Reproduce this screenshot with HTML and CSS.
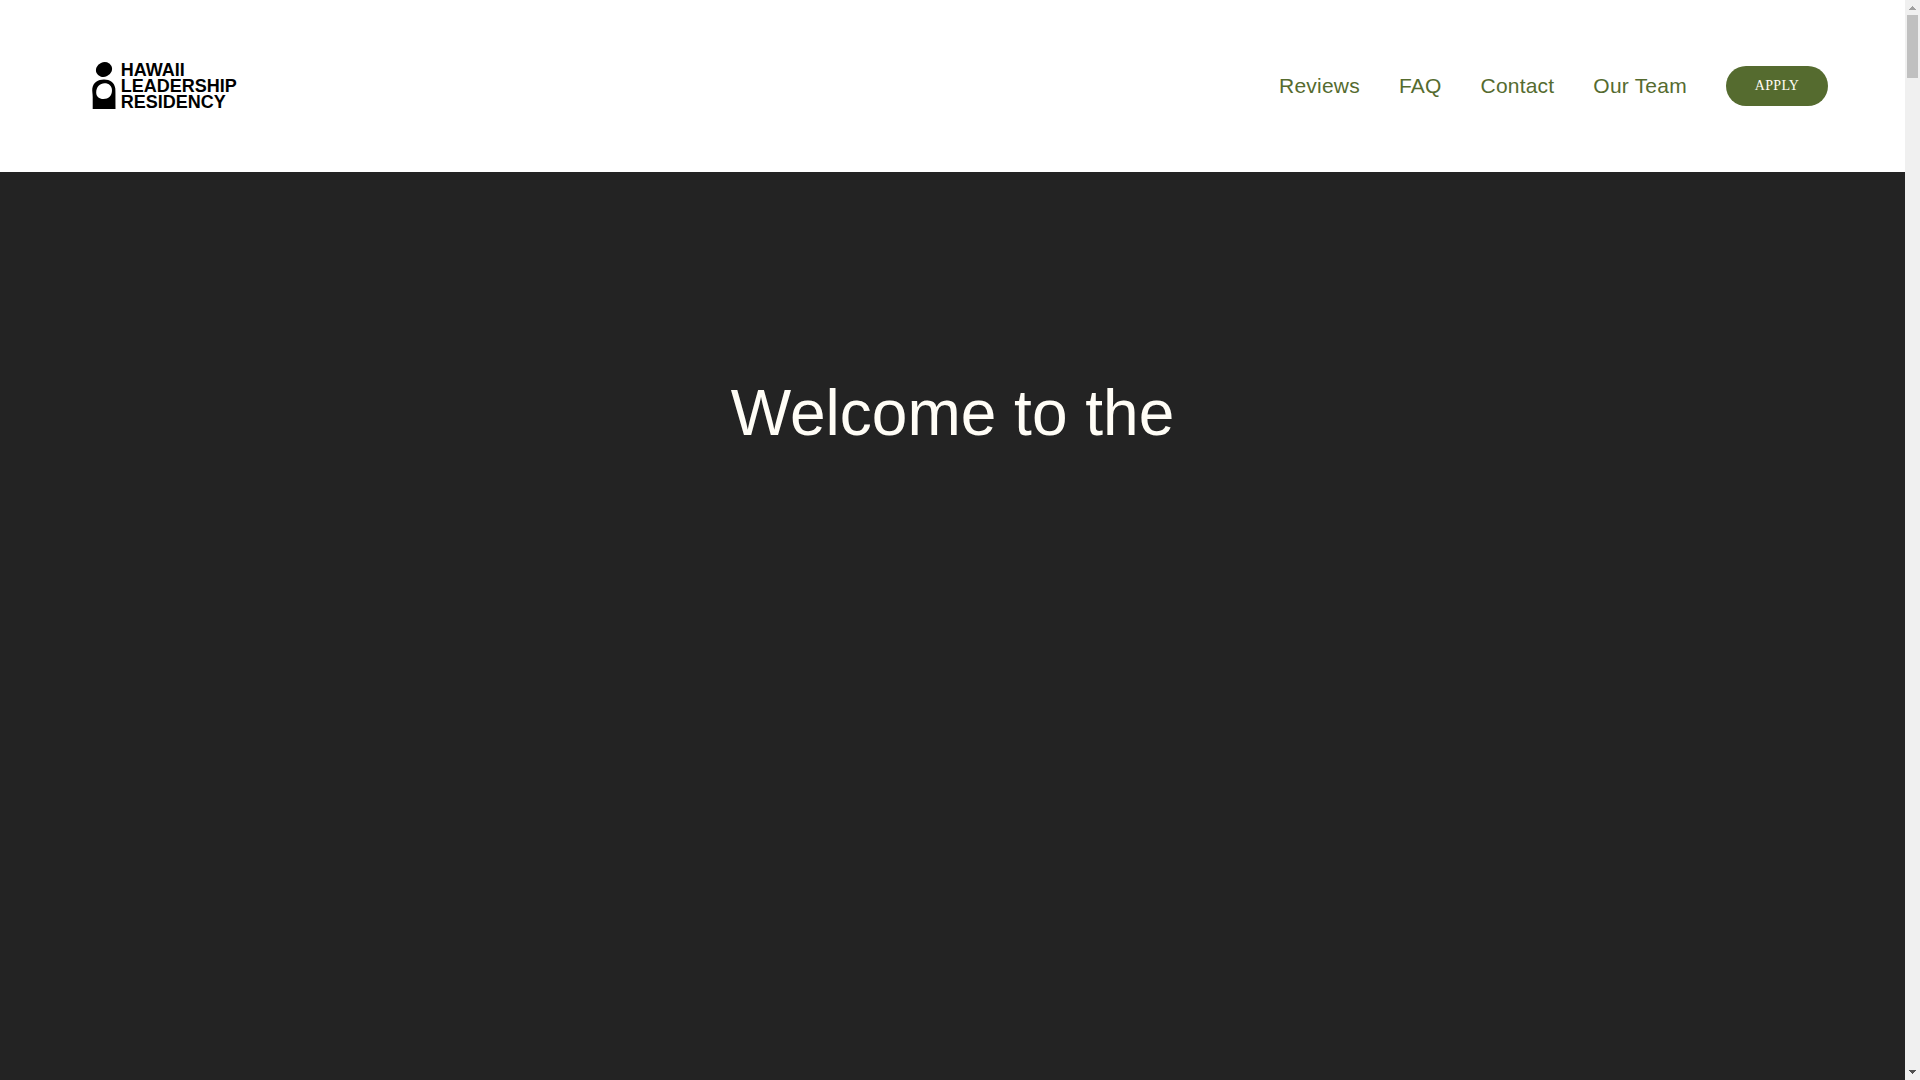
FILE: index.html
```
<!DOCTYPE html>
<html lang="en">
<head>
<meta charset="utf-8">
<meta name="viewport" content="width=device-width, initial-scale=1">
<title>Hawaii Leadership Residency</title>
<link rel="stylesheet" href="styles.css">
</head>
<body>
<div class="page">
  <header class="header">
    <a class="logo" href="#">
      <svg class="logo-mark" viewBox="0 0 24 48" aria-hidden="true">
        <ellipse cx="12" cy="7.500" rx="8.200" ry="7.300" transform="rotate(-25 12 7.500)"/>
        <path fill-rule="evenodd" d="M.7 47V35C.7 32 0 29 .3 26.500 1.200 20.500 6 17.500 12 17.500S22.500 20.500 23.300 26.500C23.500 30 23.500 34 23.500 47ZM12.500 21.300C8 21.300 4.200 25 4.200 30.500 4.200 34.500 7 37 11.500 37 16.500 37 20 33.500 20 28.500 20 24 17 21.300 12.500 21.300Z"/>
      </svg>
      <span class="logo-text">HAWAII<br>LEADERSHIP<br>RESIDENCY</span>
    </a>
    <nav class="nav">
      <a href="#">Reviews</a>
      <a href="#">FAQ</a>
      <a href="#">Contact</a>
      <a href="#">Our Team</a>
      <a class="apply" href="#">APPLY</a>
    </nav>
  </header>
  <main class="hero">
    <h1>Welcome to the</h1>
  </main>
</div>
<div class="scrollbar" aria-hidden="true">
  <svg class="arrow arrow-up" viewBox="0 0 7 4"><path d="M3 0h1v1h1v1h1v1h1v1H0V3h1V2h1V1h1z"/></svg>
  <div class="thumb"></div>
  <svg class="arrow arrow-down" viewBox="0 0 7 4"><path d="M0 0h7v1H6v1H5v1H4v1H3V3H2V2H1V1H0z"/></svg>
</div>
</body>
</html>
```
FILE: styles.css
```
* { box-sizing: border-box; }

body {
  margin: 0;
  min-height: 100vh;
  display: grid;
  grid-template-columns: 1fr 15px;
  font-family: "Liberation Sans", Arial, sans-serif;
}

.page {
  display: flex;
  flex-direction: column;
}

.header {
  display: flex;
  align-items: center;
  justify-content: space-between;
  padding: 60px 4vw;
  background: #fff;
}

.logo {
  display: flex;
  align-items: center;
  gap: 5px;
  padding: 2px 15px;
  color: #000;
  text-decoration: none;
}

.logo-mark {
  width: 24px;
  height: 48px;
}

.logo-text {
  font-size: 18px;
  font-weight: bold;
  line-height: 16px;
}

.nav {
  display: flex;
  align-items: center;
  gap: 39px;
}

.nav a {
  color: #556b2f;
  font-size: 21px;
  line-height: 32px;
  letter-spacing: 0.01em;
  text-decoration: none;
}

.nav .apply {
  padding: 4px 29px;
  border-radius: 20px;
  background: #556b2f;
  color: #fffdf6;
  font-family: "Liberation Serif", "Times New Roman", serif;
  font-size: 14px;
  letter-spacing: 0.02em;
}

.hero {
  flex: 1;
  padding: 200px 4vw 0;
  background: #232323;
  text-align: center;
}

.hero h1 {
  margin: 0;
  color: #fffdf6;
  font-size: 64px;
  font-weight: normal;
  line-height: 82px;
}

.scrollbar {
  display: flex;
  flex-direction: column;
  align-items: center;
  padding: 6px 2px;
  background: #f0f0f0;
}

.arrow {
  width: 7px;
  height: 4px;
}

.arrow-up { fill: #a0a0a0; }

.arrow-down {
  margin-top: auto;
  fill: #505050;
}

.thumb {
  width: 11px;
  height: 63px;
  margin-top: 5px;
  background: #c0c0c0;
}
```
